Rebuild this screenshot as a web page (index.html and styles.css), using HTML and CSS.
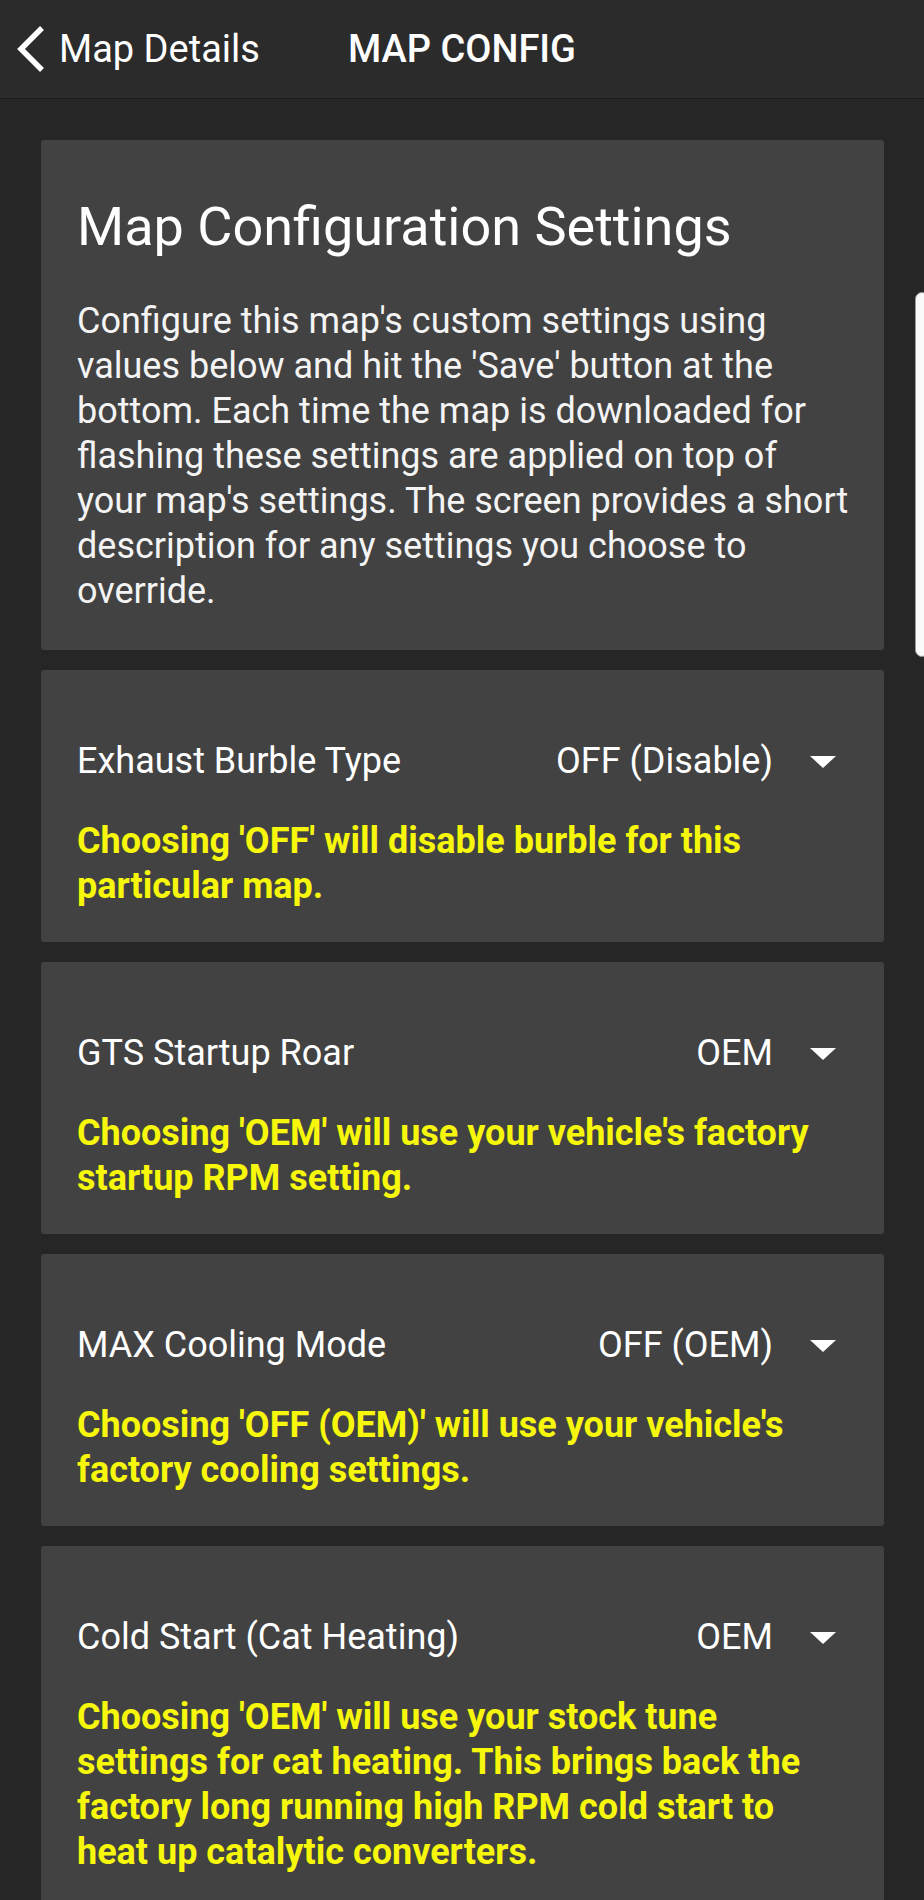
FILE: index.html
```html
<!DOCTYPE html>
<html lang="en">
<head>
    <meta charset="UTF-8">
    <meta name="viewport" content="width=device-width, initial-scale=1.0">
    <title>Map Config</title>
    <link rel="stylesheet" href="styles.css">
</head>
<body>
    <header class="topbar">
        <a class="back" href="#">
            <svg class="back-icon" width="28" height="46" viewBox="0 0 28 46">
                <polyline points="25,2 4,23 25,44" fill="none" stroke="#fff" stroke-width="5.5" stroke-linecap="butt" stroke-linejoin="miter"/>
            </svg>
            <span>Map Details</span>
        </a>
        <h1 class="topbar-title">MAP CONFIG</h1>
        <div></div>
    </header>

    <main class="content">
        <section class="card intro">
            <h2>Map Configuration Settings</h2>
            <p>Configure this map's custom settings using values below and hit the 'Save' button at the bottom. Each time the map is downloaded for flashing these settings are applied on top of your map's settings. The screen provides a short description for any settings you choose to override.</p>
        </section>

        <section class="card setting">
            <div class="setting-row">
                <span class="setting-label">Exhaust Burble Type</span>
                <span class="setting-value">OFF (Disable)</span>
                <span class="caret"></span>
            </div>
            <p class="setting-note">Choosing 'OFF' will disable burble for this particular map.</p>
        </section>

        <section class="card setting">
            <div class="setting-row">
                <span class="setting-label">GTS Startup Roar</span>
                <span class="setting-value">OEM</span>
                <span class="caret"></span>
            </div>
            <p class="setting-note">Choosing 'OEM' will use your vehicle's factory startup RPM setting.</p>
        </section>

        <section class="card setting">
            <div class="setting-row">
                <span class="setting-label">MAX Cooling Mode</span>
                <span class="setting-value">OFF (OEM)</span>
                <span class="caret"></span>
            </div>
            <p class="setting-note">Choosing 'OFF (OEM)' will use your vehicle's factory cooling settings.</p>
        </section>

        <section class="card setting">
            <div class="setting-row">
                <span class="setting-label">Cold Start (Cat Heating)</span>
                <span class="setting-value">OEM</span>
                <span class="caret"></span>
            </div>
            <p class="setting-note">Choosing 'OEM' will use your stock tune settings for cat heating. This brings back the factory long running high RPM cold start to heat up catalytic converters.</p>
        </section>
    </main>

    <div class="edge-handle"></div>
</body>
</html>
```

FILE: styles.css
```css
body {
    margin: 0;
    background-color: #262626;
    font-family: Roboto, "Liberation Sans", sans-serif;
    color: #fff;
}

.topbar {
    display: grid;
    grid-template-columns: 1fr auto 1fr;
    align-items: center;
    height: 98px;
    background-color: #2b2b2b;
    border-bottom: 1px solid #1b1b1b;
}
.back {
    display: flex;
    align-items: center;
    gap: 14px;
    padding-left: 17px;
    color: #fff;
    text-decoration: none;
    font-size: 38px;
    line-height: 46px;
}
.back-icon {
    display: block;
}
.topbar-title {
    margin: 0;
    font-size: 38px;
    font-weight: 500;
    line-height: 46px;
}

.content {
    display: flex;
    flex-direction: column;
    gap: 20px;
    padding: 41px 40px 40px 41px;
}
.card {
    background-color: #424242;
    border-radius: 3px;
}

.intro {
    padding: 56px 32px 36px 36px;
}
.intro h2 {
    margin: 0 0 41px;
    font-size: 54px;
    font-weight: 400;
    line-height: 62px;
}
.intro p {
    margin: 0;
    font-size: 36px;
    line-height: 45px;
    color: #f4f4f4;
}

.setting {
    padding: 69px 36px 33px 36px;
}
.setting-row {
    display: flex;
    align-items: center;
    padding-right: 12px;
    font-size: 36px;
    line-height: 45px;
}
.setting-label {
    flex: 1;
}
.setting-value {
    margin-right: -2px;
}
.caret {
    width: 0;
    height: 0;
    margin-left: 39px;
    border-left: 13px solid transparent;
    border-right: 13px solid transparent;
    border-top: 12px solid #fff;
}
.setting-note {
    margin: 35px 0 0;
    font-size: 36px;
    font-weight: 700;
    line-height: 45px;
    color: #f7f70c;
}

.edge-handle {
    position: absolute;
    top: 292px;
    left: 915px;
    width: 14px;
    height: 365px;
    background-color: #fafafa;
    border: 1px solid #9a9a9a;
    border-radius: 8px;
    box-sizing: border-box;
}
```
